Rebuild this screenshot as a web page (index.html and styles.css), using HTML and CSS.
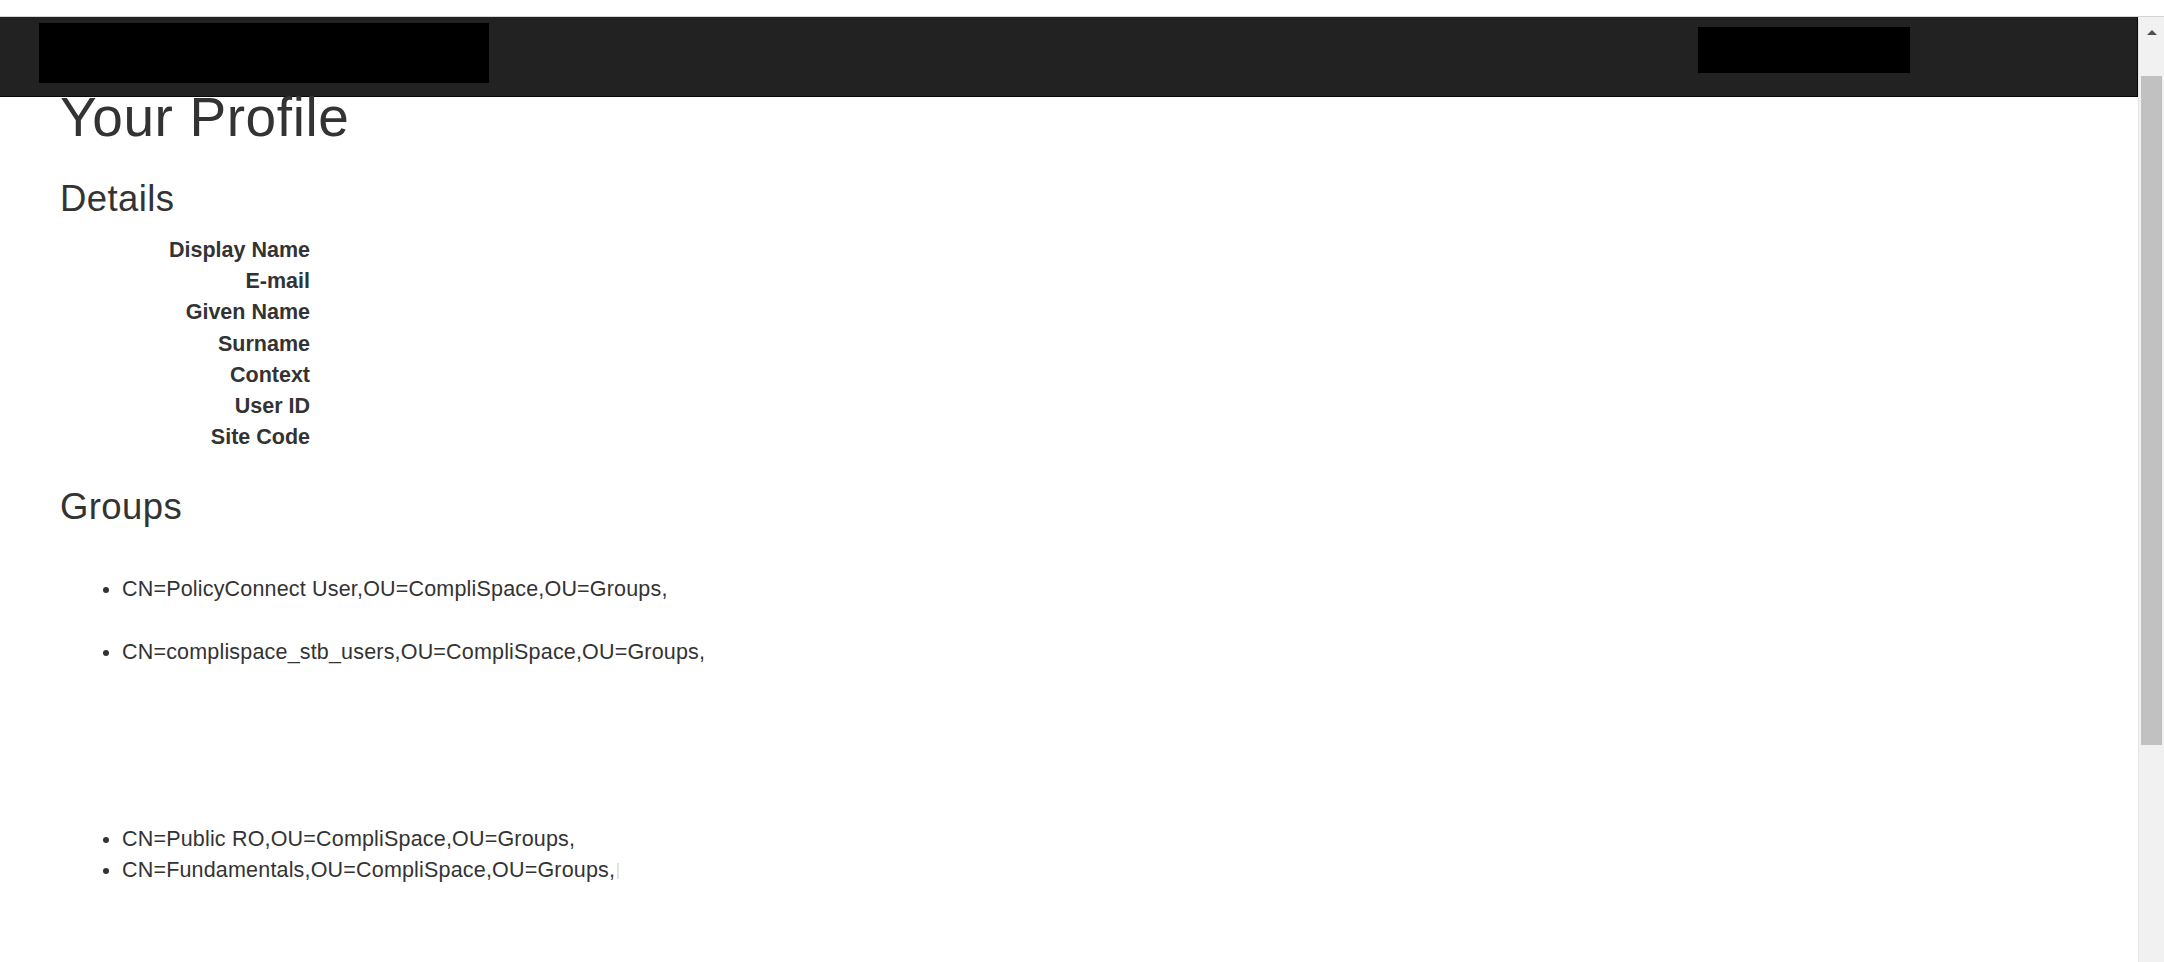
FILE: index.html
```html
<!DOCTYPE html>
<html lang="en">
<head>
<meta charset="utf-8">
<title>Your Profile</title>
<link rel="stylesheet" href="styles.css">
</head>
<body>
<div class="chrome"></div>
<div class="viewport">
  <div class="page">
    <header class="navbar">
      <div class="redact brand"></div>
      <div class="redact user"></div>
    </header>
    <main class="content">
      <h1 class="title">Your Profile</h1>
      <h3 class="section details-title">Details</h3>
      <dl class="details">
        <dt>Display Name</dt><dd></dd>
        <dt>E-mail</dt><dd></dd>
        <dt>Given Name</dt><dd></dd>
        <dt>Surname</dt><dd></dd>
        <dt>Context</dt><dd></dd>
        <dt>User ID</dt><dd></dd>
        <dt>Site Code</dt><dd></dd>
      </dl>
      <h3 class="section groups-title">Groups</h3>
      <ul class="groups">
        <li class="gap-1">CN=PolicyConnect User,OU=CompliSpace,OU=Groups,</li>
        <li class="gap-5">CN=complispace_stb_users,OU=CompliSpace,OU=Groups,</li>
        <li>CN=Public RO,OU=CompliSpace,OU=Groups,</li>
        <li>CN=Fundamentals,OU=CompliSpace,OU=Groups,<span class="trace"></span></li>
      </ul>
    </main>
  </div>
  <div class="scrollbar">
    <div class="sb-arrow"><span class="sb-tri"></span></div>
    <div class="sb-thumb"></div>
  </div>
</div>
</body>
</html>
```

FILE: styles.css
```css
html, body {
  margin: 0;
  padding: 0;
  height: 100%;
  overflow: hidden;
  background: #ffffff;
}

body {
  font-family: "Liberation Sans", Arial, Helvetica, sans-serif;
  color: #333333;
  font-size: 21.5px;
  line-height: 31.2px;
}

.chrome {
  height: 16px;
  border-bottom: 1px solid #d4d4d4;
  background: #ffffff;
}

.viewport {
  display: flex;
  height: 945px;
}

.page {
  flex: 1;
  min-width: 0;
  overflow: hidden;
}

.navbar {
  display: flex;
  justify-content: space-between;
  align-items: flex-start;
  height: 79px;
  background: #222222;
  border-bottom: 1px solid #080808;
  border-right: 1px solid #080808;
  padding: 0 227px 0 39px;
}

.redact {
  background: #000000;
}

.brand {
  width: 450px;
  height: 60px;
  margin-top: 6px;
}

.user {
  width: 212px;
  height: 46px;
  margin-top: 10px;
}

.content {
  padding-left: 60px;
}

.title {
  margin: 0;
  font-size: 55px;
  font-weight: 400;
  line-height: 40px;
  letter-spacing: 0.6px;
}

.section {
  margin: 0;
  font-size: 36.5px;
  font-weight: 400;
  line-height: 40px;
  letter-spacing: 0.4px;
}

.details-title {
  margin-top: 42px;
}

.details {
  display: grid;
  grid-template-columns: 250px 1fr;
  margin: 16px 0 34px;
}

.details dt {
  font-weight: 700;
  text-align: right;
}

.details dd {
  margin: 0;
}

.groups {
  margin: 47px 0 0;
  padding-left: 62px;
  letter-spacing: 0.18px;
}

.groups .gap-1 {
  margin-bottom: 31.2px;
}

.groups .gap-5 {
  margin-bottom: 156px;
}

.trace {
  display: inline-block;
  width: 2px;
  height: 16px;
  margin-left: 2px;
  background: #e2e2e2;
  vertical-align: -2px;
}

.scrollbar {
  width: 26px;
  background: #f1f1f1;
  border-left: 1px solid #e6e6e6;
  box-sizing: border-box;
  display: flex;
  flex-direction: column;
  align-items: flex-end;
}

.sb-arrow {
  width: 100%;
  height: 24px;
  display: flex;
  align-items: center;
  justify-content: center;
}

.sb-tri {
  width: 0;
  height: 0;
  border-left: 5.5px solid transparent;
  border-right: 5.5px solid transparent;
  border-bottom: 5px solid #505050;
  margin-top: 6px;
}

.sb-thumb {
  width: 21px;
  height: 669px;
  margin-top: 35px;
  margin-right: 2px;
  background: #c1c1c1;
}
```
